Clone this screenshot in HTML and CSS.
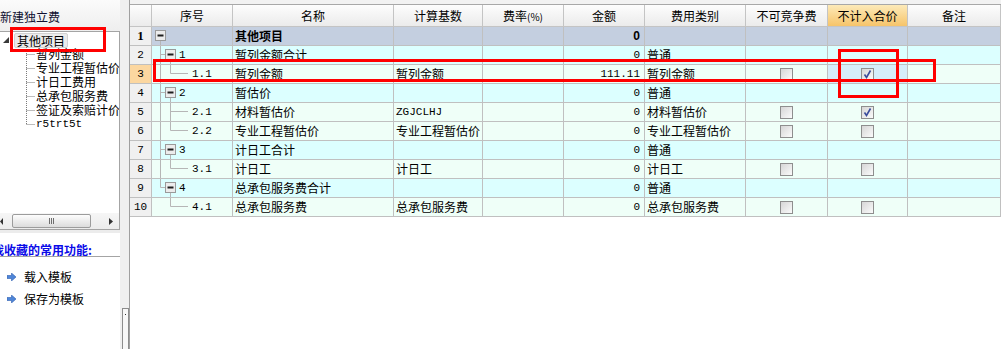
FILE: index.html
```html
<!DOCTYPE html>
<html lang="zh-CN">
<head>
<meta charset="utf-8">
<title>新建独立费</title>
<link rel="stylesheet" href="styles.css">
</head>
<body>
<div class="left">
  <div class="left-title">新建独立费</div>
  <div class="tree-box">
    <div class="tree">
      <div class="troot">
        <svg class="expander" width="7" height="7" viewBox="0 0 7 7"><polygon points="6,0 6,6 0,6" fill="#3a3a3a"/></svg>
        <span class="troot-label">其他项目</span>
      </div>
      <div class="tchild"><svg class="conn" width="36" height="14"><line x1="26.5" y1="0" x2="26.5" y2="14"/><line x1="26.5" y1="7.5" x2="35" y2="7.5"/></svg><span>暂列金额</span></div>
      <div class="tchild"><svg class="conn" width="36" height="14"><line x1="26.5" y1="0" x2="26.5" y2="14"/><line x1="26.5" y1="7.5" x2="35" y2="7.5"/></svg><span>专业工程暂估价</span></div>
      <div class="tchild"><svg class="conn" width="36" height="14"><line x1="26.5" y1="0" x2="26.5" y2="14"/><line x1="26.5" y1="7.5" x2="35" y2="7.5"/></svg><span>计日工费用</span></div>
      <div class="tchild"><svg class="conn" width="36" height="14"><line x1="26.5" y1="0" x2="26.5" y2="14"/><line x1="26.5" y1="7.5" x2="35" y2="7.5"/></svg><span>总承包服务费</span></div>
      <div class="tchild"><svg class="conn" width="36" height="14"><line x1="26.5" y1="0" x2="26.5" y2="14"/><line x1="26.5" y1="7.5" x2="35" y2="7.5"/></svg><span>签证及索赔计价</span></div>
      <div class="tchild"><svg class="conn" width="36" height="14"><line x1="26.5" y1="0" x2="26.5" y2="7.5"/><line x1="26.5" y1="7.5" x2="35" y2="7.5"/></svg><span class="mono">r5trt5t</span></div>
    </div>
    <div class="hscroll">
      <svg class="harrow-l" width="4" height="7"><polygon points="3,0 3,7 0,3.5" fill="#333"/></svg>
      <div class="hthumb"><span class="grip"></span><span class="grip"></span><span class="grip"></span></div>
      <svg class="harrow-r" width="4" height="7"><polygon points="0,0 0,7 4,3.5" fill="#333"/></svg>
    </div>
  </div>
  <div class="fav-title">我收藏的常用功能:</div>
  <div class="fav-list">
    <div class="fav-item"><svg width="9" height="8" viewBox="0 0 9 8"><polygon points="0,2.5 4.5,2.5 4.5,0 9,4 4.5,8 4.5,5.5 0,5.5" fill="#4f86d8" stroke="#2f5fb0" stroke-width="0.6"/></svg><span>载入模板</span></div>
    <div class="fav-item"><svg width="9" height="8" viewBox="0 0 9 8"><polygon points="0,2.5 4.5,2.5 4.5,0 9,4 4.5,8 4.5,5.5 0,5.5" fill="#4f86d8" stroke="#2f5fb0" stroke-width="0.6"/></svg><span>保存为模板</span></div>
  </div>
</div>

<div class="splitter"><div class="vthumb"><span class="vdot"></span></div></div>

<div class="grid-area">
  <div class="grid">
    <div class="h"></div>
    <div class="h">序号</div>
    <div class="h">名称</div>
    <div class="h">计算基数</div>
    <div class="h">费率<small>(%)</small></div>
    <div class="h">金额</div>
    <div class="h">费用类别</div>
    <div class="h">不可竞争费</div>
    <div class="h hl">不计入合价</div>
    <div class="h">备注</div>

    <div class="row top">
      <div class="c rn"><b>1</b></div>
      <div class="c seq"><svg class="tl" width="20" height="18"><line x1="8.5" y1="14" x2="8.5" y2="18"/><rect class="bx" x="3.5" y="3.5" width="10" height="10"/><rect class="mn" x="5.5" y="7.5" width="6" height="2"/></svg></div>
      <div class="c"><b>其他项目</b></div>
      <div class="c"></div>
      <div class="c"></div>
      <div class="c amt"><b>0</b></div>
      <div class="c"></div>
      <div class="c"></div>
      <div class="c"></div>
      <div class="c"></div>
    </div>

    <div class="row par">
      <div class="c rn">2</div>
      <div class="c seq"><svg class="tl" width="27" height="18"><line x1="8.5" y1="0" x2="8.5" y2="18"/><line x1="8.5" y1="8.5" x2="13.5" y2="8.5"/><line x1="18.5" y1="14" x2="18.5" y2="18"/><rect class="bx" x="13.5" y="3.5" width="10" height="10"/><rect class="mn" x="15.5" y="7.5" width="6" height="2"/></svg><span class="mono">1</span></div>
      <div class="c">暂列金额合计</div>
      <div class="c"></div>
      <div class="c"></div>
      <div class="c amt">0</div>
      <div class="c">普通</div>
      <div class="c"></div>
      <div class="c"></div>
      <div class="c"></div>
    </div>

    <div class="row leaf">
      <div class="c rn sel">3</div>
      <div class="c seq"><svg class="tl" width="40" height="18"><line x1="8.5" y1="0" x2="8.5" y2="18"/><line x1="18.5" y1="0" x2="18.5" y2="8.5"/><line x1="18.5" y1="8.5" x2="36" y2="8.5"/></svg><span class="mono">1.1</span></div>
      <div class="c">暂列金额</div>
      <div class="c">暂列金额</div>
      <div class="c"></div>
      <div class="c amt">111.11</div>
      <div class="c">暂列金额</div>
      <div class="c ck"><span class="cb"></span></div>
      <div class="c ck cur"><span class="cb"><svg width="11" height="11" viewBox="0 0 11 11"><path d="M2.5 5.5 L4.5 8.5 L8.5 1.5" fill="none" stroke="#3a4c9c" stroke-width="1.6"/></svg></span></div>
      <div class="c"></div>
    </div>

    <div class="row par">
      <div class="c rn">4</div>
      <div class="c seq"><svg class="tl" width="27" height="18"><line x1="8.5" y1="0" x2="8.5" y2="18"/><line x1="8.5" y1="8.5" x2="13.5" y2="8.5"/><line x1="18.5" y1="14" x2="18.5" y2="18"/><rect class="bx" x="13.5" y="3.5" width="10" height="10"/><rect class="mn" x="15.5" y="7.5" width="6" height="2"/></svg><span class="mono">2</span></div>
      <div class="c">暂估价</div>
      <div class="c"></div>
      <div class="c"></div>
      <div class="c amt">0</div>
      <div class="c">普通</div>
      <div class="c"></div>
      <div class="c"></div>
      <div class="c"></div>
    </div>

    <div class="row leaf">
      <div class="c rn">5</div>
      <div class="c seq"><svg class="tl" width="40" height="18"><line x1="8.5" y1="0" x2="8.5" y2="18"/><line x1="18.5" y1="0" x2="18.5" y2="18"/><line x1="18.5" y1="8.5" x2="36" y2="8.5"/></svg><span class="mono">2.1</span></div>
      <div class="c">材料暂估价</div>
      <div class="c mono">ZGJCLHJ</div>
      <div class="c"></div>
      <div class="c amt">0</div>
      <div class="c">材料暂估价</div>
      <div class="c ck"><span class="cb"></span></div>
      <div class="c ck"><span class="cb"><svg width="11" height="11" viewBox="0 0 11 11"><path d="M2.5 5.5 L4.5 8.5 L8.5 1.5" fill="none" stroke="#3a4c9c" stroke-width="1.6"/></svg></span></div>
      <div class="c"></div>
    </div>

    <div class="row leaf">
      <div class="c rn">6</div>
      <div class="c seq"><svg class="tl" width="40" height="18"><line x1="8.5" y1="0" x2="8.5" y2="18"/><line x1="18.5" y1="0" x2="18.5" y2="8.5"/><line x1="18.5" y1="8.5" x2="36" y2="8.5"/></svg><span class="mono">2.2</span></div>
      <div class="c">专业工程暂估价</div>
      <div class="c">专业工程暂估价</div>
      <div class="c"></div>
      <div class="c amt">0</div>
      <div class="c">专业工程暂估价</div>
      <div class="c ck"><span class="cb"></span></div>
      <div class="c ck"><span class="cb"></span></div>
      <div class="c"></div>
    </div>

    <div class="row par">
      <div class="c rn">7</div>
      <div class="c seq"><svg class="tl" width="27" height="18"><line x1="8.5" y1="0" x2="8.5" y2="18"/><line x1="8.5" y1="8.5" x2="13.5" y2="8.5"/><line x1="18.5" y1="14" x2="18.5" y2="18"/><rect class="bx" x="13.5" y="3.5" width="10" height="10"/><rect class="mn" x="15.5" y="7.5" width="6" height="2"/></svg><span class="mono">3</span></div>
      <div class="c">计日工合计</div>
      <div class="c"></div>
      <div class="c"></div>
      <div class="c amt">0</div>
      <div class="c">普通</div>
      <div class="c"></div>
      <div class="c"></div>
      <div class="c"></div>
    </div>

    <div class="row leaf">
      <div class="c rn">8</div>
      <div class="c seq"><svg class="tl" width="40" height="18"><line x1="8.5" y1="0" x2="8.5" y2="18"/><line x1="18.5" y1="0" x2="18.5" y2="8.5"/><line x1="18.5" y1="8.5" x2="36" y2="8.5"/></svg><span class="mono">3.1</span></div>
      <div class="c">计日工</div>
      <div class="c">计日工</div>
      <div class="c"></div>
      <div class="c amt">0</div>
      <div class="c">计日工</div>
      <div class="c ck"><span class="cb"></span></div>
      <div class="c ck"><span class="cb"></span></div>
      <div class="c"></div>
    </div>

    <div class="row par">
      <div class="c rn">9</div>
      <div class="c seq"><svg class="tl" width="27" height="18"><line x1="8.5" y1="0" x2="8.5" y2="8.5"/><line x1="8.5" y1="8.5" x2="13.5" y2="8.5"/><line x1="18.5" y1="14" x2="18.5" y2="18"/><rect class="bx" x="13.5" y="3.5" width="10" height="10"/><rect class="mn" x="15.5" y="7.5" width="6" height="2"/></svg><span class="mono">4</span></div>
      <div class="c">总承包服务费合计</div>
      <div class="c"></div>
      <div class="c"></div>
      <div class="c amt">0</div>
      <div class="c">普通</div>
      <div class="c"></div>
      <div class="c"></div>
      <div class="c"></div>
    </div>

    <div class="row leaf">
      <div class="c rn">10</div>
      <div class="c seq"><svg class="tl" width="40" height="18"><line x1="18.5" y1="0" x2="18.5" y2="8.5"/><line x1="18.5" y1="8.5" x2="36" y2="8.5"/></svg><span class="mono">4.1</span></div>
      <div class="c">总承包服务费</div>
      <div class="c">总承包服务费</div>
      <div class="c"></div>
      <div class="c amt">0</div>
      <div class="c">总承包服务费</div>
      <div class="c ck"><span class="cb"></span></div>
      <div class="c ck"><span class="cb"></span></div>
      <div class="c"></div>
    </div>
  </div>
</div>

<div class="mark mark-a"></div>
<div class="mark mark-b"></div>
<div class="mark mark-c"></div>
</body>
</html>
```
FILE: styles.css
```css
html, body {
  margin: 0;
  padding: 0;
}
body {
  position: relative;
  width: 1001px;
  height: 349px;
  overflow: hidden;
  display: flex;
  background: #fff;
  color: #000;
  font-family: "Noto Sans CJK SC", "Liberation Sans", sans-serif;
  font-size: 12px;
  line-height: 14px;
}
.mono {
  font-family: "Liberation Mono", "Noto Sans CJK SC", monospace;
  font-size: 11px;
}

/* left panel */
.left {
  width: 120px;
  flex: none;
  display: flex;
  flex-direction: column;
  overflow: hidden;
  background: #fff;
}
.left-title {
  height: 31px;
  box-sizing: border-box;
  padding-top: 3px;
  display: flex;
  align-items: center;
  white-space: nowrap;
  color: #101030;
  background: linear-gradient(#fbfbfb, #eeeeee);
}
.tree-box {
  height: 199px;
  box-sizing: border-box;
  border: 1px solid #a4a4a4;
  border-left: none;
  display: flex;
  flex-direction: column;
  background: #fff;
  flex: none;
}
.tree {
  flex: 1;
  padding-top: 1px;
  overflow: hidden;
}
.troot {
  display: flex;
  align-items: center;
  height: 14px;
  white-space: nowrap;
}
.expander {
  margin-left: 3px;
  flex: none;
}
.troot-label {
  margin-left: 4px;
  background: #ebebeb;
  border: 1px solid #d2d2d2;
  border-radius: 2px;
  padding: 0 2px;
  line-height: 13px;
}
.tchild {
  display: flex;
  align-items: center;
  height: 14px;
  white-space: nowrap;
}
.tchild span {
  line-height: 14px;
}
.conn {
  flex: none;
}
.conn line {
  stroke: #7a7a7a;
  stroke-width: 1;
  stroke-dasharray: 1 1;
}
.hscroll {
  height: 16px;
  flex: none;
  display: flex;
  align-items: center;
  background: linear-gradient(#f6f6f6, #ececec);
}
.harrow-l {
  flex: none;
}
.hthumb {
  margin-left: 8px;
  width: 79px;
  height: 14px;
  box-sizing: border-box;
  border: 1px solid #9c9c9c;
  border-radius: 2px;
  background: linear-gradient(#fdfdfd, #dcdcdc);
  display: flex;
  justify-content: center;
  align-items: center;
  gap: 1px;
}
.grip {
  width: 1px;
  height: 6px;
  background: #6e6e6e;
}
.harrow-r {
  margin-left: 18px;
  flex: none;
}
.fav-title {
  height: 27px;
  box-sizing: border-box;
  padding-top: 10px;
  text-indent: -8px;
  white-space: nowrap;
  font-weight: bold;
  color: #0a0ae8;
  border-bottom: 1px solid #a4a4a4;
  border-top: 3px solid #ececec;
}
.fav-list {
  padding-top: 9px;
}
.fav-item {
  display: flex;
  align-items: center;
  height: 22px;
  padding-left: 7px;
  gap: 8px;
  white-space: nowrap;
}

/* splitter */
.splitter {
  width: 9px;
  flex: none;
  background: #f0f0f0;
  border-right: 1px solid #a0a0a0;
  display: flex;
  flex-direction: column;
  justify-content: flex-end;
}
.vthumb {
  margin-left: 2px;
  width: 7px;
  height: 41px;
  box-sizing: border-box;
  border: 1px solid #8c8c8c;
  border-bottom: none;
  background: #f7f7f7;
  display: flex;
  justify-content: center;
  padding-top: 5px;
}
.vdot {
  width: 1px;
  height: 1px;
  background: #333;
}

/* grid */
.grid-area {
  flex: 1;
  min-width: 0;
  overflow: hidden;
  padding-top: 4px;
  background: linear-gradient(#f2f2f2 4px, #fff 4px);
}
.grid {
  display: grid;
  grid-template-columns: 22px 81px 161px 89px 81px 81px 101px 82px 80px 1fr;
  border-top: 1px solid #a8a8a8;
}
.h {
  height: 22px;
  box-sizing: border-box;
  border-right: 1px solid #c4c4c4;
  border-bottom: 1px solid #c4c4c4;
  background: linear-gradient(#fdfdfd, #ebebeb);
  text-align: center;
  line-height: 21px;
  white-space: nowrap;
  overflow: hidden;
}
.h small {
  font-size: 10px;
}
.h.hl {
  background: linear-gradient(#fdeab9, #f6c46a);
}
.row {
  display: contents;
}
.c {
  height: 19px;
  box-sizing: border-box;
  border-right: 1px solid #c0c0c0;
  border-bottom: 1px solid #c0c0c0;
  line-height: 18px;
  padding: 0 2px;
  white-space: nowrap;
  overflow: hidden;
}
.row.top .c { background: #c4cfe0; }
.row.par .c { background: #dcffff; }
.row.leaf .c { background: #effff8; }
.row .c.rn {
  background: #f0f0f0;
  text-align: center;
  padding: 0;
  font-family: "Liberation Mono", monospace;
  font-size: 11px;
}
.row .c.rn b {
  font-family: "Liberation Serif", serif;
  font-size: 13px;
}
.row .c.rn.sel { background: #fcd7a0; }
.row .c.cur { background: #d6edfa; }
.c.seq {
  display: flex;
  align-items: flex-start;
  padding: 0;
}
.c.seq .mono { line-height: 18px; }
.tl { flex: none; }
.tl line {
  stroke: #b6b6b6;
  stroke-width: 1;
}
.tl .bx {
  fill: #ececec;
  stroke: #9a9a9a;
  stroke-width: 1;
}
.tl .mn { fill: #1e1e1e; }
.c.amt {
  text-align: right;
  padding-right: 4px;
  font-family: "Liberation Mono", monospace;
  font-size: 11px;
}
.c.amt b {
  font-family: "Liberation Sans", sans-serif;
  font-size: 12px;
}
.c.ck {
  display: flex;
  justify-content: center;
  align-items: center;
  padding: 0;
}
.cb {
  width: 13px;
  height: 13px;
  box-sizing: border-box;
  border: 1px solid #8e8e8e;
  background: linear-gradient(135deg, #d6d6d6, #fbfbfb);
  display: flex;
  justify-content: center;
  align-items: center;
}

/* red annotation boxes */
.mark {
  position: absolute;
  box-sizing: border-box;
  border: 3px solid #ff0000;
}
.mark-a { left: 10px; top: 27px; width: 96px; height: 25px; }
.mark-b { left: 153px; top: 59px; width: 783px; height: 23px; }
.mark-c { left: 838px; top: 49px; width: 61px; height: 49px; }
```
